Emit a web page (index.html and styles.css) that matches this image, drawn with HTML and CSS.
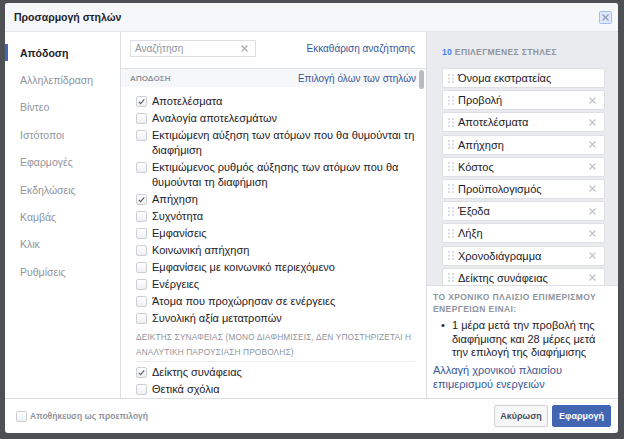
FILE: index.html
```html
<!DOCTYPE html>
<html lang="el">
<head>
<meta charset="utf-8">
<title>Προσαρμογή στηλών</title>
<link rel="stylesheet" href="styles.css">
</head>
<body>
<div class="modal">
  <div class="header">
    <div class="title">Προσαρμογή στηλών</div>
    <svg class="close" width="13" height="13" viewBox="0 0 13 13">
      <rect x="0.5" y="0.5" width="12" height="12" rx="1" fill="#dfe8fb" stroke="#9fbcf4"/>
      <path d="M3.5 3.5 L9.5 9.5 M9.5 3.5 L3.5 9.5" stroke="#8c9dbf" stroke-width="1.3"/>
    </svg>
  </div>
  <div class="body">
    <nav class="nav">
      <div class="nav-item active">Απόδοση</div>
      <div class="nav-item">Αλληλεπίδραση</div>
      <div class="nav-item">Βίντεο</div>
      <div class="nav-item">Ιστότοποι</div>
      <div class="nav-item">Εφαρμογές</div>
      <div class="nav-item">Εκδηλώσεις</div>
      <div class="nav-item">Καμβάς</div>
      <div class="nav-item">Κλικ</div>
      <div class="nav-item">Ρυθμίσεις</div>
    </nav>
    <section class="middle">
      <div class="search-row">
        <div class="search">
          <span class="placeholder">Αναζήτηση</span>
          <svg class="x" width="7" height="7" viewBox="0 0 7 7"><path d="M0.5 0.5 L6.5 6.5 M6.5 0.5 L0.5 6.5" stroke="#a8acb3" stroke-width="1.2"/></svg>
        </div>
        <a class="link">Εκκαθάριση αναζήτησης</a>
      </div>
      <div class="scroll">
        <div class="list">
          <div class="section-head">
            <span class="cap">ΑΠΟΔΟΣΗ</span>
            <a class="link">Επιλογή όλων των στηλών</a>
          </div>
          <div class="items">
            <div class="item"><span class="cb on"><svg width="9" height="9" viewBox="0 0 9 9"><path d="M1.8 4.8 L3.6 6.6 L7.3 2.4" fill="none" stroke="#5d6168" stroke-width="1.2"/></svg></span><span class="txt">Αποτελέσματα</span></div>
            <div class="item"><span class="cb"></span><span class="txt">Αναλογία αποτελεσμάτων</span></div>
            <div class="item"><span class="cb"></span><span class="txt">Εκτιμώμενη αύξηση των ατόμων που θα θυμούνται τη<br>διαφήμιση</span></div>
            <div class="item"><span class="cb"></span><span class="txt">Εκτιμώμενος ρυθμός αύξησης των ατόμων που θα<br>θυμούνται τη διαφήμιση</span></div>
            <div class="item"><span class="cb on"><svg width="9" height="9" viewBox="0 0 9 9"><path d="M1.8 4.8 L3.6 6.6 L7.3 2.4" fill="none" stroke="#5d6168" stroke-width="1.2"/></svg></span><span class="txt">Απήχηση</span></div>
            <div class="item"><span class="cb"></span><span class="txt">Συχνότητα</span></div>
            <div class="item"><span class="cb"></span><span class="txt">Εμφανίσεις</span></div>
            <div class="item"><span class="cb"></span><span class="txt">Κοινωνική απήχηση</span></div>
            <div class="item"><span class="cb"></span><span class="txt">Εμφανίσεις με κοινωνικό περιεχόμενο</span></div>
            <div class="item"><span class="cb"></span><span class="txt">Ενέργειες</span></div>
            <div class="item"><span class="cb"></span><span class="txt">Άτομα που προχώρησαν σε ενέργειες</span></div>
            <div class="item"><span class="cb"></span><span class="txt">Συνολική αξία μετατροπών</span></div>
            <div class="subhead">ΔΕΙΚΤΗΣ ΣΥΝΑΦΕΙΑΣ (ΜΟΝΟ ΔΙΑΦΗΜΙΣΕΙΣ, ΔΕΝ ΥΠΟΣΤΗΡΙΖΕΤΑΙ Η<br>ΑΝΑΛΥΤΙΚΗ ΠΑΡΟΥΣΙΑΣΗ ΠΡΟΒΟΛΗΣ)</div>
            <div class="item"><span class="cb on"><svg width="9" height="9" viewBox="0 0 9 9"><path d="M1.8 4.8 L3.6 6.6 L7.3 2.4" fill="none" stroke="#5d6168" stroke-width="1.2"/></svg></span><span class="txt">Δείκτης συνάφειας</span></div>
            <div class="item"><span class="cb"></span><span class="txt">Θετικά σχόλια</span></div>
          </div>
        </div>
        <div class="track"><div class="thumb"></div></div>
      </div>
    </section>
    <aside class="right">
      <div class="selected">
        <div class="sel-head"><span class="count">10</span> ΕΠΙΛΕΓΜΕΝΕΣ ΣΤΗΛΕΣ</div>
        <div class="chips">
          <div class="chip"><svg class="grip" width="6" height="9" viewBox="0 0 6 9"><g fill="#dadde1"><rect x="0" y="0" width="2" height="2"/><rect x="4" y="0" width="2" height="2"/><rect x="0" y="3.5" width="2" height="2"/><rect x="4" y="3.5" width="2" height="2"/><rect x="0" y="7" width="2" height="2"/><rect x="4" y="7" width="2" height="2"/></g></svg><span class="chip-txt">Όνομα εκστρατείας</span></div>
          <div class="chip"><svg class="grip" width="6" height="9" viewBox="0 0 6 9"><g fill="#dadde1"><rect x="0" y="0" width="2" height="2"/><rect x="4" y="0" width="2" height="2"/><rect x="0" y="3.5" width="2" height="2"/><rect x="4" y="3.5" width="2" height="2"/><rect x="0" y="7" width="2" height="2"/><rect x="4" y="7" width="2" height="2"/></g></svg><span class="chip-txt">Προβολή</span><svg class="rm" width="7" height="7" viewBox="0 0 7 7"><path d="M0.5 0.5 L6.5 6.5 M6.5 0.5 L0.5 6.5" stroke="#bec3c9" stroke-width="1.2"/></svg></div>
          <div class="chip"><svg class="grip" width="6" height="9" viewBox="0 0 6 9"><g fill="#dadde1"><rect x="0" y="0" width="2" height="2"/><rect x="4" y="0" width="2" height="2"/><rect x="0" y="3.5" width="2" height="2"/><rect x="4" y="3.5" width="2" height="2"/><rect x="0" y="7" width="2" height="2"/><rect x="4" y="7" width="2" height="2"/></g></svg><span class="chip-txt">Αποτελέσματα</span><svg class="rm" width="7" height="7" viewBox="0 0 7 7"><path d="M0.5 0.5 L6.5 6.5 M6.5 0.5 L0.5 6.5" stroke="#bec3c9" stroke-width="1.2"/></svg></div>
          <div class="chip"><svg class="grip" width="6" height="9" viewBox="0 0 6 9"><g fill="#dadde1"><rect x="0" y="0" width="2" height="2"/><rect x="4" y="0" width="2" height="2"/><rect x="0" y="3.5" width="2" height="2"/><rect x="4" y="3.5" width="2" height="2"/><rect x="0" y="7" width="2" height="2"/><rect x="4" y="7" width="2" height="2"/></g></svg><span class="chip-txt">Απήχηση</span><svg class="rm" width="7" height="7" viewBox="0 0 7 7"><path d="M0.5 0.5 L6.5 6.5 M6.5 0.5 L0.5 6.5" stroke="#bec3c9" stroke-width="1.2"/></svg></div>
          <div class="chip"><svg class="grip" width="6" height="9" viewBox="0 0 6 9"><g fill="#dadde1"><rect x="0" y="0" width="2" height="2"/><rect x="4" y="0" width="2" height="2"/><rect x="0" y="3.5" width="2" height="2"/><rect x="4" y="3.5" width="2" height="2"/><rect x="0" y="7" width="2" height="2"/><rect x="4" y="7" width="2" height="2"/></g></svg><span class="chip-txt">Κόστος</span><svg class="rm" width="7" height="7" viewBox="0 0 7 7"><path d="M0.5 0.5 L6.5 6.5 M6.5 0.5 L0.5 6.5" stroke="#bec3c9" stroke-width="1.2"/></svg></div>
          <div class="chip"><svg class="grip" width="6" height="9" viewBox="0 0 6 9"><g fill="#dadde1"><rect x="0" y="0" width="2" height="2"/><rect x="4" y="0" width="2" height="2"/><rect x="0" y="3.5" width="2" height="2"/><rect x="4" y="3.5" width="2" height="2"/><rect x="0" y="7" width="2" height="2"/><rect x="4" y="7" width="2" height="2"/></g></svg><span class="chip-txt">Προϋπολογισμός</span><svg class="rm" width="7" height="7" viewBox="0 0 7 7"><path d="M0.5 0.5 L6.5 6.5 M6.5 0.5 L0.5 6.5" stroke="#bec3c9" stroke-width="1.2"/></svg></div>
          <div class="chip"><svg class="grip" width="6" height="9" viewBox="0 0 6 9"><g fill="#dadde1"><rect x="0" y="0" width="2" height="2"/><rect x="4" y="0" width="2" height="2"/><rect x="0" y="3.5" width="2" height="2"/><rect x="4" y="3.5" width="2" height="2"/><rect x="0" y="7" width="2" height="2"/><rect x="4" y="7" width="2" height="2"/></g></svg><span class="chip-txt">Έξοδα</span><svg class="rm" width="7" height="7" viewBox="0 0 7 7"><path d="M0.5 0.5 L6.5 6.5 M6.5 0.5 L0.5 6.5" stroke="#bec3c9" stroke-width="1.2"/></svg></div>
          <div class="chip"><svg class="grip" width="6" height="9" viewBox="0 0 6 9"><g fill="#dadde1"><rect x="0" y="0" width="2" height="2"/><rect x="4" y="0" width="2" height="2"/><rect x="0" y="3.5" width="2" height="2"/><rect x="4" y="3.5" width="2" height="2"/><rect x="0" y="7" width="2" height="2"/><rect x="4" y="7" width="2" height="2"/></g></svg><span class="chip-txt">Λήξη</span><svg class="rm" width="7" height="7" viewBox="0 0 7 7"><path d="M0.5 0.5 L6.5 6.5 M6.5 0.5 L0.5 6.5" stroke="#bec3c9" stroke-width="1.2"/></svg></div>
          <div class="chip"><svg class="grip" width="6" height="9" viewBox="0 0 6 9"><g fill="#dadde1"><rect x="0" y="0" width="2" height="2"/><rect x="4" y="0" width="2" height="2"/><rect x="0" y="3.5" width="2" height="2"/><rect x="4" y="3.5" width="2" height="2"/><rect x="0" y="7" width="2" height="2"/><rect x="4" y="7" width="2" height="2"/></g></svg><span class="chip-txt">Χρονοδιάγραμμα</span><svg class="rm" width="7" height="7" viewBox="0 0 7 7"><path d="M0.5 0.5 L6.5 6.5 M6.5 0.5 L0.5 6.5" stroke="#bec3c9" stroke-width="1.2"/></svg></div>
          <div class="chip"><svg class="grip" width="6" height="9" viewBox="0 0 6 9"><g fill="#dadde1"><rect x="0" y="0" width="2" height="2"/><rect x="4" y="0" width="2" height="2"/><rect x="0" y="3.5" width="2" height="2"/><rect x="4" y="3.5" width="2" height="2"/><rect x="0" y="7" width="2" height="2"/><rect x="4" y="7" width="2" height="2"/></g></svg><span class="chip-txt">Δείκτης συνάφειας</span><svg class="rm" width="7" height="7" viewBox="0 0 7 7"><path d="M0.5 0.5 L6.5 6.5 M6.5 0.5 L0.5 6.5" stroke="#bec3c9" stroke-width="1.2"/></svg></div>
        </div>
      </div>
      <div class="info">
        <div class="info-head">ΤΟ ΧΡΟΝΙΚΟ ΠΛΑΙΣΙΟ ΕΠΙΜΕΡΙΣΜΟΥ<br>ΕΝΕΡΓΕΙΩΝ ΕΙΝΑΙ:</div>
        <div class="bullet"><span class="dot">•</span><span>1 μέρα μετά την προβολή της<br>διαφήμισης και 28 μέρες μετά<br>την επιλογή της διαφήμισης</span></div>
        <a class="info-link">Αλλαγή χρονικού πλαισίου<br>επιμερισμού ενεργειών</a>
      </div>
    </aside>
  </div>
  <div class="footer">
    <label class="save"><span class="cb"></span><span>Αποθήκευση ως προεπιλογή</span></label>
    <div class="buttons">
      <button class="btn cancel">Ακύρωση</button>
      <button class="btn apply">Εφαρμογή</button>
    </div>
  </div>
</div>
</body>
</html>
```

FILE: styles.css
```css
* { box-sizing: border-box; }
html, body { margin: 0; padding: 0; }
body {
  width: 624px;
  height: 439px;
  overflow: hidden;
  background: #4d5055;
  font-family: "Liberation Sans", Arial, sans-serif;
  color: #1d2129;
}
.modal {
  margin: 3px 0 0 5px;
  width: 613px;
  height: 430px;
  background: #fff;
  border-radius: 3px;
  overflow: hidden;
  display: flex;
  flex-direction: column;
}
.header {
  flex: none;
  height: 29px;
  background: #f6f7f9;
  border-bottom: 1px solid #e5e5e5;
  display: flex;
  align-items: center;
  justify-content: space-between;
  padding: 0 6px 0 9px;
}
.title { font-size: 10.5px; font-weight: bold; color: #1d2129; }
.close { display: block; margin-top: 1px; }

.body { flex: 1; display: flex; min-height: 0; }

.nav {
  flex: none;
  width: 116px;
  border-right: 1px solid #dddfe2;
  padding-top: 7px;
}
.nav-item {
  height: 27.4px;
  display: flex;
  align-items: center;
  font-size: 10.5px;
  color: #90949c;
}
.nav-item::before {
  content: "";
  width: 3px;
  height: 17px;
  margin-right: 12px;
  background: transparent;
}
.nav-item.active { color: #1d2129; font-weight: bold; }
.nav-item.active::before { background: #4267b2; }

.middle {
  flex: none;
  width: 305px;
  display: flex;
  flex-direction: column;
}
.search-row {
  flex: none;
  height: 37px;
  border-bottom: 1px solid #dddfe2;
  display: flex;
  align-items: flex-start;
  justify-content: space-between;
  padding: 8px 11px 0 9px;
}
.search {
  width: 126px;
  height: 17px;
  border: 1px solid #dddfe2;
  display: flex;
  align-items: center;
  justify-content: space-between;
  padding: 0 7px 0 4px;
}
.placeholder { font-size: 10px; color: #90949c; }
.x { display: block; }
.link {
  font-size: 10px;
  color: #365899;
  cursor: pointer;
}
.search-row .link { margin-top: 3px; }

.scroll { flex: 1; display: flex; min-height: 0; overflow: hidden; }
.list { flex: 1; min-width: 0; }
.track { flex: none; width: 8px; padding: 1px 1px 0 1px; }
.thumb { width: 5px; height: 19px; background: #b9bbbe; border-radius: 3px; }

.section-head {
  height: 18px;
  background: #f6f7f9;
  display: flex;
  align-items: center;
  justify-content: space-between;
  padding: 0 2px 0 9px;
}
.cap { font-size: 8px; color: #90949c; font-weight: bold; letter-spacing: 0.1px; }

.items { padding: 6px 0 0 15px; }
.item {
  display: flex;
  align-items: flex-start;
  padding: 1px 0;
  font-size: 11px;
  line-height: 15px;
  white-space: nowrap;
}
.cb {
  flex: none;
  width: 11px;
  height: 11px;
  margin: 2px 5px 0 0;
  border: 1px solid #ccd0d5;
  border-radius: 2px;
  background: linear-gradient(#fff, #eff0f2);
  display: flex;
  align-items: center;
  justify-content: center;
}
.cb svg { display: block; }
.subhead {
  margin: 3px 3px 2px 0;
  font-size: 8.3px;
  letter-spacing: 0.15px;
  line-height: 15px;
  color: #90949c;
  border-bottom: 1px solid #e9ebee;
  white-space: nowrap;
  padding-bottom: 1px;
}

.right {
  flex: 1;
  min-width: 0;
  border-left: 1px solid #dddfe2;
  background: #e9ebee;
  display: flex;
  flex-direction: column;
}
.selected {
  flex: 1;
  min-height: 0;
  overflow: hidden;
  padding: 15px 13px 0 15px;
}
.sel-head {
  font-size: 8.5px;
  letter-spacing: 0.35px;
  line-height: 10px;
  font-weight: bold;
  color: #90949c;
}
.count { color: #4080ff; }
.chips {
  margin-top: 11px;
  display: flex;
  flex-direction: column;
  gap: 2.2px;
}
.chip {
  flex: none;
  height: 20px;
  background: #fff;
  border: 1px solid #dddfe2;
  border-radius: 2px;
  display: flex;
  align-items: center;
  padding: 0 8px 0 5px;
  font-size: 11px;
}
.grip { flex: none; display: block; margin-right: 4px; }
.chip-txt { flex: 1; white-space: nowrap; }
.rm { flex: none; display: block; }

.info {
  flex: none;
  height: 113px;
  background: #fff;
  border-top: 1px solid #dddfe2;
  padding: 5px 8px 0 6px;
}
.info-head {
  font-size: 8.5px;
  letter-spacing: 0.4px;
  line-height: 12px;
  font-weight: bold;
  color: #90949c;
  white-space: nowrap;
}
.bullet {
  margin-top: 4px;
  display: flex;
  font-size: 11px;
  line-height: 13.5px;
  white-space: nowrap;
}
.dot { width: 8px; margin-left: 8px; margin-right: 3px; }
.info-link {
  display: block;
  margin-top: 3px;
  font-size: 11px;
  line-height: 14px;
  color: #365899;
  white-space: nowrap;
}

.footer {
  flex: none;
  height: 35px;
  border-top: 1px solid #dddfe2;
  display: flex;
  align-items: center;
  justify-content: space-between;
  padding: 0 7px 0 11px;
}
.save {
  display: flex;
  align-items: center;
  font-size: 8.5px;
  font-weight: bold;
  color: #90949c;
}
.save .cb { margin: 0 3px 0 0; }
.buttons { display: flex; gap: 4px; }
.btn {
  height: 22px;
  border-radius: 2px;
  font-family: "Liberation Sans", Arial, sans-serif;
  font-size: 9px;
  font-weight: bold;
  padding: 0;
  cursor: pointer;
}
.cancel { width: 54px; background: #f6f7f9; border: 1px solid #ced0d4; color: #4b4f56; }
.apply { width: 59px; background: #4267b2; border: 1px solid #4267b2; color: #fff; }
```
